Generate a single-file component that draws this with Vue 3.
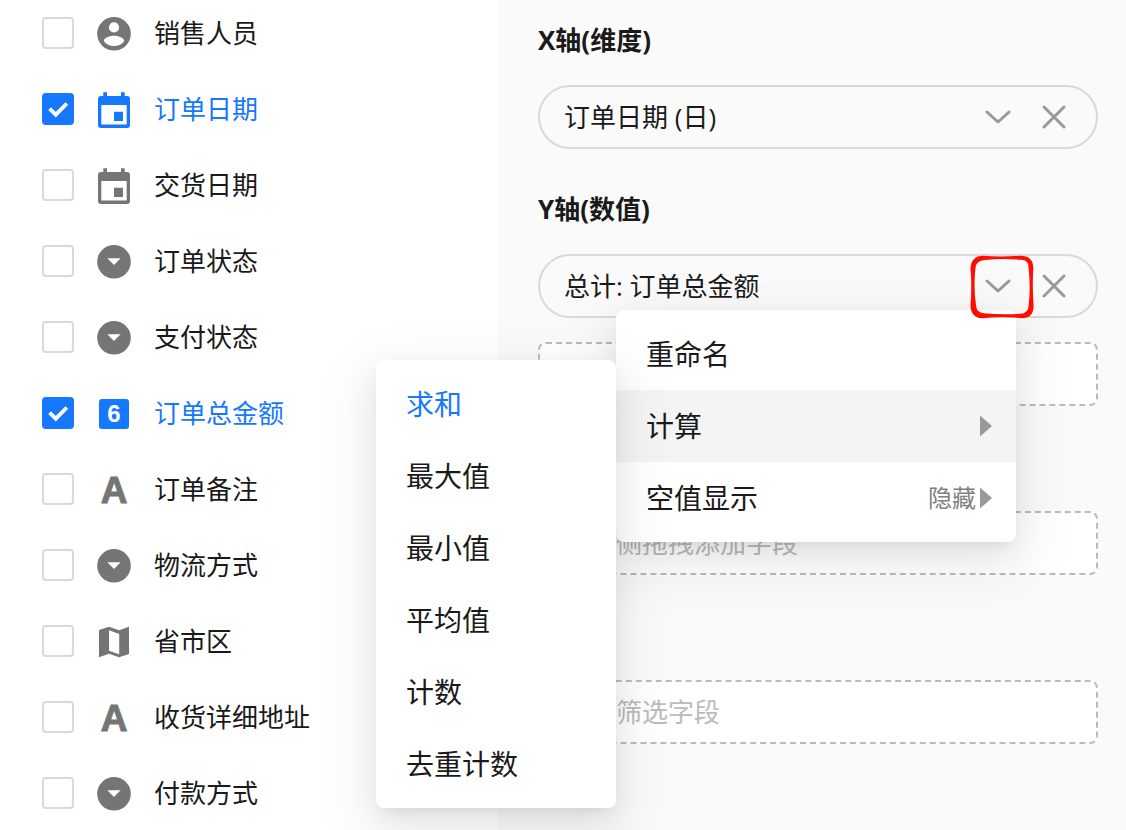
<script setup>
import { ref } from 'vue'

const fields = ref([
  { id: 'sales', label: '销售人员', icon: 'person', checked: false },
  { id: 'order-date', label: '订单日期', icon: 'date', checked: true },
  { id: 'delivery-date', label: '交货日期', icon: 'date', checked: false },
  { id: 'order-status', label: '订单状态', icon: 'select', checked: false },
  { id: 'pay-status', label: '支付状态', icon: 'select', checked: false },
  { id: 'amount', label: '订单总金额', icon: 'number', checked: true },
  { id: 'remark', label: '订单备注', icon: 'text', checked: false },
  { id: 'logistics', label: '物流方式', icon: 'select', checked: false },
  { id: 'region', label: '省市区', icon: 'map', checked: false },
  { id: 'address', label: '收货详细地址', icon: 'text', checked: false },
  { id: 'pay-method', label: '付款方式', icon: 'select', checked: false }
])

const menuItems = [
  { label: '重命名' },
  { label: '计算', arrow: true, active: true },
  { label: '空值显示', arrow: true, value: '隐藏' }
]

const calculations = ['求和', '最大值', '最小值', '平均值', '计数', '去重计数']
const calculation = ref('求和')
</script>

<template>
  <div class="page">
    <ul class="fields">
      <li v-for="f in fields" :key="f.id">
        <label class="field" :class="{ on: f.checked }" :for="f.id">
          <span class="tick">
            <input :id="f.id" v-model="f.checked" type="checkbox" />
            <svg v-if="f.checked" viewBox="0 0 32 32" aria-hidden="true">
              <path d="M7.6 15.7l6.2 6 11-11.2" fill="none" stroke="#fff" stroke-width="3.8" />
            </svg>
          </span>
          <svg class="icon" viewBox="0 0 40 40" aria-hidden="true">
            <template v-if="f.icon === 'person'">
              <circle cx="20" cy="20.8" r="16.8" fill="currentColor" />
              <circle cx="20" cy="14.4" r="5.1" fill="#fff" />
              <path d="M9.800 27.900c0-3.400 6.800-5.200 10.200-5.200s10.200 1.800 10.200 5.200c-2.200 3.200-5.900 5.200-10.200 5.200s-8-2-10.200-5.200z" fill="#fff" />
            </template>
            <path
              v-else-if="f.icon === 'date'"
              fill="currentColor"
              fill-rule="evenodd"
              d="M9.300 3.300H13V7H27V3.300H30.700V7H33a3 3 0 0 1 3 3V36a3 3 0 0 1-3 3H7a3 3 0 0 1-3-3V10a3 3 0 0 1 3-3H9.300zM7.300 16V35.400H32.700V16zM20 22.800H29V32H20z"
            />
            <template v-else-if="f.icon === 'select'">
              <circle cx="20" cy="20.8" r="16.8" fill="currentColor" />
              <path d="M13.300 17.200H26.600L20 24z" fill="#fff" />
            </template>
            <template v-else-if="f.icon === 'number'">
              <rect x="5" y="6" width="30" height="30" rx="3" fill="currentColor" />
              <text class="digit" x="20" y="29" text-anchor="middle">6</text>
            </template>
            <text v-else-if="f.icon === 'text'" class="letter" x="20" y="34" text-anchor="middle">A</text>
            <path
              v-else
              fill="currentColor"
              fill-rule="evenodd"
              d="M5 9L15 5.700L25 9.200L35 5.700V33L25 36.300L15 32.800L5 36.300zM15 9.300V29.700L25.200 33.200V12.900z"
            />
          </svg>
          <span>{{ f.label }}</span>
        </label>
      </li>
    </ul>

    <main class="config">
      <section>
        <h2>X轴(维度)</h2>
        <div class="pill">
          <span class="name">订单日期 (日)</span>
          <button type="button" aria-label="展开">
            <svg viewBox="0 0 40 40"><path d="M9 15l11 10 11-10" /></svg>
          </button>
          <button type="button" aria-label="移除">
            <svg viewBox="0 0 40 40"><path d="M10 10l20 20M30 10L10 30" /></svg>
          </button>
        </div>
      </section>

      <section>
        <h2>Y轴(数值)</h2>
        <div class="pill">
          <span class="name">总计: 订单总金额</span>
          <button type="button" aria-label="展开" aria-expanded="true">
            <svg viewBox="0 0 40 40"><path d="M9 15l11 10 11-10" /></svg>
            <svg class="mark" viewBox="0 0 64 64" aria-hidden="true">
              <path
                fill-rule="evenodd"
                d="M13 .8Q32 2.200 50 .7Q62.500 .5 63.300 12Q62.200 32 63.600 51Q63.500 62.500 53 63.200Q32 61.500 12 63.300Q1 62.500 .5 51Q2 32 .5 13Q1.500 1 13 .8zM15 5Q32 3.200 51 4.800Q58.500 5 58.500 12Q60.800 32 58.700 50Q58.500 58.500 50 58.800Q32 60 14 58.200Q6.500 58 6 50Q3.300 32 5.500 13Q6 5.500 15 5z"
              />
            </svg>
          </button>
          <button type="button" aria-label="移除">
            <svg viewBox="0 0 40 40"><path d="M10 10l20 20M30 10L10 30" /></svg>
          </button>

          <div class="popup menu">
            <ul>
              <li v-for="m in menuItems" :key="m.label">
                <button type="button" class="item" :class="{ active: m.active }">
                  <span class="grow">{{ m.label }}</span>
                  <span v-if="m.value" class="value">{{ m.value }}</span>
                  <svg v-if="m.arrow" class="arrow" viewBox="0 0 12 22" aria-hidden="true">
                    <path d="M0 .5L12 11L0 21.500z" />
                  </svg>
                </button>
              </li>
            </ul>
            <ul class="popup submenu">
              <li v-for="c in calculations" :key="c">
                <button type="button" class="item" :class="{ chosen: c === calculation }" @click="calculation = c">
                  {{ c }}
                </button>
              </li>
            </ul>
          </div>
        </div>
        <div class="drop"></div>
      </section>

      <section class="untitled">
        <div class="drop">从左侧拖拽添加字段</div>
      </section>

      <section class="untitled">
        <div class="drop">添加筛选字段</div>
      </section>
    </main>
  </div>
</template>

<style>
body {
  margin: 0;
  overflow: hidden;
}
</style>

<style scoped>
.page {
  display: grid;
  grid-template-columns: 498fr 628fr;
  min-height: 100vh;
  background: #fff;
  color: #1a1a1a;
  font-family: "Open Sans", "Noto Sans CJK SC", sans-serif;
  font-size: 26px;
  font-weight: 400;
  line-height: 32px;
}

ul {
  margin: 0;
  padding: 0;
  list-style: none;
}

button {
  padding: 0;
  border: 0;
  background: none;
  color: inherit;
  font: inherit;
  cursor: pointer;
}

.fields {
  display: flex;
  flex-direction: column;
  gap: 44px;
  padding: 17px 0 0 42px;
}

.field {
  display: flex;
  align-items: center;
  gap: 20px;
  height: 32px;
}

.field.on {
  color: #1677ff;
}

.tick {
  display: grid;
  width: 32px;
  height: 32px;
}

.tick > * {
  grid-area: 1 / 1;
  width: 32px;
  height: 32px;
}

.tick svg {
  pointer-events: none;
}

.tick input {
  appearance: none;
  box-sizing: border-box;
  margin: 0;
  border: 2px solid #d9d9d9;
  border-radius: 4px;
  background: #fff;
}

.tick input:checked {
  border-color: #1677ff;
  background: #1677ff;
}

.icon {
  flex: none;
  width: 40px;
  height: 40px;
  overflow: visible;
  color: #757575;
}

.on .icon {
  color: #1677ff;
}

.digit {
  fill: #fff;
  font: 700 24px "Liberation Sans", sans-serif;
}

.letter {
  fill: currentColor;
  stroke: currentColor;
  stroke-width: 1;
  font: 700 37px "Liberation Sans", sans-serif;
}

.config {
  display: flex;
  flex-direction: column;
  gap: 44px;
  padding: 24px 28px 0 40px;
  background: #fafafa;
}

h2 {
  margin: 0 0 29px;
  font-size: 26px;
  font-weight: 700;
  line-height: 32px;
}

.pill {
  position: relative;
  display: flex;
  align-items: center;
  gap: 16px;
  box-sizing: border-box;
  height: 64px;
  padding: 0 22px 0 24px;
  border: 2px solid #d9d9d9;
  border-radius: 32px;
}

.name {
  flex: 1;
}

.pill > button {
  position: relative;
  width: 40px;
  height: 40px;
}

.pill > button svg {
  display: block;
  fill: none;
  stroke: #999;
  stroke-width: 3;
  stroke-linecap: round;
  stroke-linejoin: round;
}

.pill > button[aria-expanded] {
  z-index: 3;
}

.pill > button .mark {
  position: absolute;
  top: -11px;
  left: -8px;
  width: 64px;
  height: 64px;
  fill: #ff0d00;
  stroke: none;
}

.popup {
  position: absolute;
  padding: 8px 0;
  border-radius: 8px;
  background: #fff;
  box-shadow:
    0 6px 12px -8px rgba(0, 0, 0, 0.12),
    0 12px 32px rgba(0, 0, 0, 0.08),
    0 18px 56px 16px rgba(0, 0, 0, 0.05);
}

.menu {
  z-index: 2;
  top: 54px;
  right: 80px;
  width: 400px;
}

.submenu {
  top: 50px;
  right: 100%;
  width: 240px;
}

.item {
  display: flex;
  align-items: center;
  gap: 4px;
  width: 100%;
  height: 72px;
  padding: 0 24px 0 30px;
  font-size: 28px;
  text-align: left;
}

.item.active {
  background: #f4f4f4;
}

.item.chosen {
  color: #1677ff;
}

.grow {
  flex: 1;
}

.value {
  color: #808080;
  font-size: 24px;
}

.arrow {
  width: 12px;
  height: 22px;
  fill: #999;
}

.drop {
  box-sizing: border-box;
  height: 64px;
  padding: 14px 24px;
  border: 2px dashed #bbb;
  border-radius: 8px;
  background: #fff;
  color: #bbb;
}

.pill + .drop {
  margin-top: 24px;
}

.untitled {
  padding-top: 61px;
}
</style>
